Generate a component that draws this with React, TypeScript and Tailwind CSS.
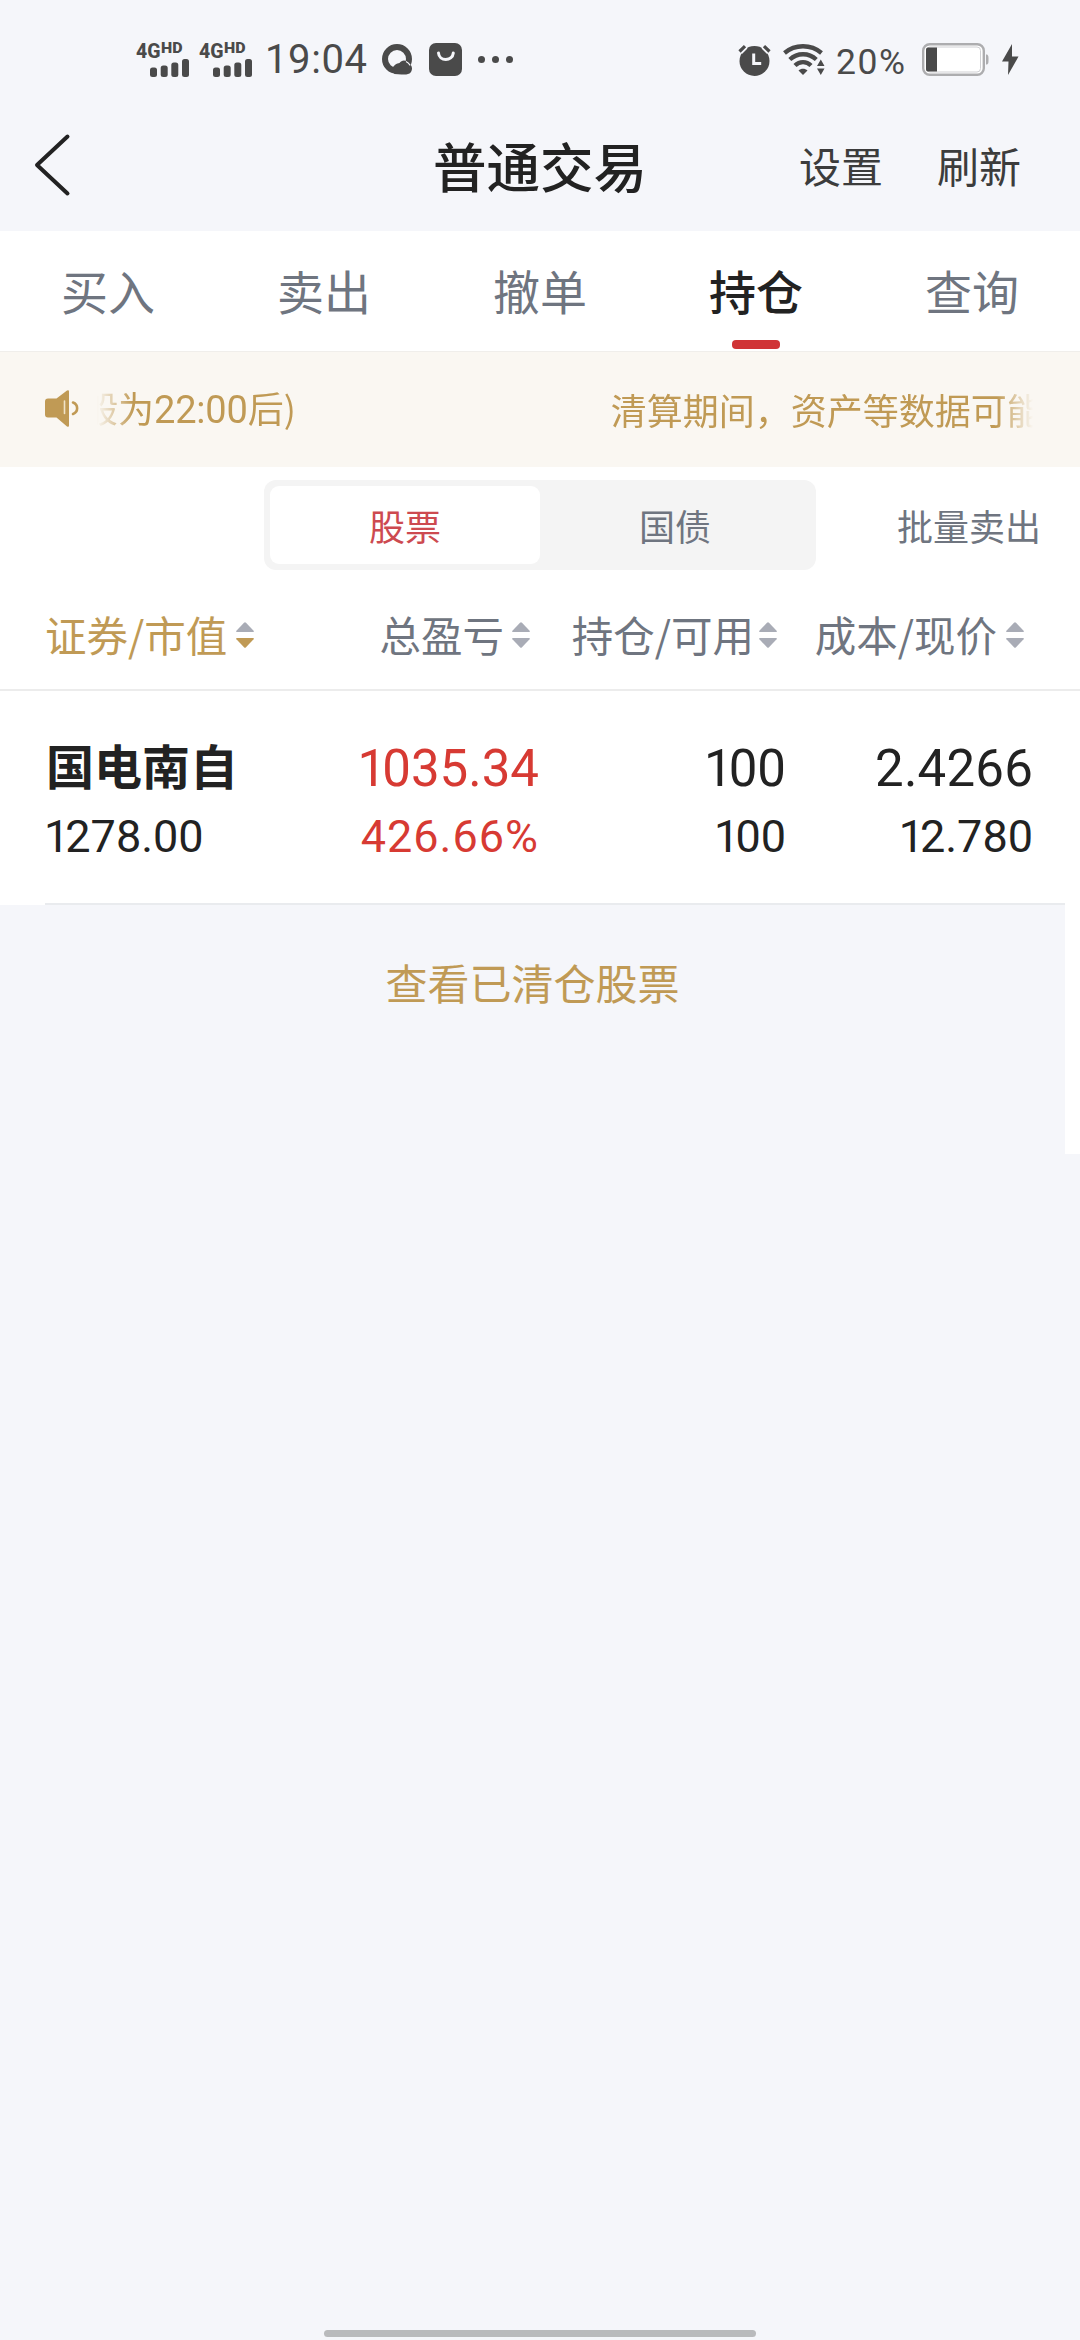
import React, { useState } from 'react';

interface SortIconProps {
  active?: boolean;
}

interface Holding {
  name: string;
  marketValue: string;
  profit: string;
  profitRate: string;
  amount: string;
  available: string;
  cost: string;
  price: string;
}

const TABS = ['买入', '卖出', '撤单', '持仓', '查询'];

const HOLDINGS: Holding[] = [
  {
    name: '国电南自',
    marketValue: '1278.00',
    profit: '1035.34',
    profitRate: '426.66%',
    amount: '100',
    available: '100',
    cost: '2.4266',
    price: '12.780'
  }
];

const SignalIcon: React.FC = () => (
  <svg className="overflow-visible" width="54" height="36" viewBox="0 0 54 36" fill="#4a4a4a">
    <text x="0" y="16" fontSize="20.500" fontWeight="800" fontFamily="Roboto, sans-serif" textLength="24.500" lengthAdjust="spacingAndGlyphs">4G</text>
    <text x="25" y="11" fontSize="14" fontWeight="900" fontFamily="Roboto, sans-serif" textLength="21.500" lengthAdjust="spacingAndGlyphs">HD</text>
    <rect x="14" y="25.500" width="7" height="9.500" rx="2.500" />
    <rect x="24.700" y="23.500" width="7" height="11.500" rx="2.500" />
    <rect x="35.300" y="20.500" width="7" height="14.500" rx="2.500" />
    <rect x="46" y="17" width="7" height="18" rx="2.500" />
  </svg>
);

const QIcon: React.FC = () => (
  <svg width="31" height="31" viewBox="0 0 31 31">
    <circle cx="15" cy="15" r="12" fill="none" stroke="#4a4a4a" strokeWidth="6" />
    <path d="M10 26c1-5 5-6.500 7.500-7 2-3.500 7-3.500 8.500 0 4.500 1.500 5.500 7 1.500 10.500-2 1-4 1-8 1l-7-.5z" fill="#4a4a4a" />
    <path d="M24 17.500c1.800 1 3 2 4.200 3.800" fill="none" stroke="#f5f6fa" strokeWidth="1.200" />
  </svg>
);

const BagIcon: React.FC = () => (
  <svg width="33" height="33" viewBox="0 0 33 33">
    <rect width="33" height="33" rx="7" fill="#4a4a4a" />
    <path d="M9.500 10c.5 8.500 14 8.500 14.800 0" fill="none" stroke="#f5f6fa" strokeWidth="3" strokeLinecap="round" />
  </svg>
);

const AlarmIcon: React.FC = () => (
  <svg width="33" height="33" viewBox="0 0 33 33">
    <circle cx="16.500" cy="17" r="15" fill="#4a4a4a" />
    <path d="M1.500 7.500 7 2M31.500 7.500 26 2" stroke="#f5f6fa" strokeWidth="7" />
    <path d="M1.500 7.500 7 2.200M31.500 7.500 26 2.200" stroke="#4a4a4a" strokeWidth="3.200" />
    <path d="M15.700 9.500v10h7.500" fill="none" stroke="#f5f6fa" strokeWidth="3" />
  </svg>
);

const WifiIcon: React.FC = () => (
  <svg width="42" height="31" viewBox="0 0 42 31">
    <g fill="none" stroke="#4a4a4a" strokeWidth="4.300">
      <path d="M1.500 9c10.500-9 26.500-9 37 0" />
      <path d="M6.800 15.500c7.500-7 19-7 26.500 0" />
      <path d="M12 21.500c4.500-4.500 11.500-4.500 16 0" />
    </g>
    <path d="M15.500 26.500c2.500-2.500 6.500-2.500 9 0L20 31z" fill="#4a4a4a" />
    <path d="M37.800 15.500 41.500 22h-7.500z M37.800 31l3.700-6.500h-7.500z" fill="#4a4a4a" />
  </svg>
);

const BatteryIcon: React.FC = () => (
  <svg width="67" height="33" viewBox="0 0 67 33">
    <rect x="1.200" y="1.200" width="60.600" height="30.600" rx="6.500" fill="#fff" stroke="#adadaf" strokeWidth="2.400" />
    <rect x="4.500" y="4" width="54" height="25" rx="3.500" fill="none" stroke="#d0d0d3" strokeWidth="1" />
    <path d="M6 4.500h9v24h-9a2 2 0 0 1-2-2v-20a2 2 0 0 1 2-2z" fill="#4a4a4a" />
    <path d="M64 11.500c2.500 0 2.500 2 2.500 5s0 5-2.500 5z" fill="#adadaf" />
  </svg>
);

const StatusBar: React.FC = () => (
  <div className="flex h-[100px] items-center pt-[19px] pl-[136px] pr-[61px] font-[Roboto,sans-serif] text-[#4a4a4a]">
    <SignalIcon />
    <div className="ml-[9px]"><SignalIcon /></div>
    <div className="ml-[12px] mt-[1px] w-[104px] text-[40px] leading-none tracking-[0.6px]">19:04</div>
    <div className="ml-[13px]"><QIcon /></div>
    <div className="ml-[16px]"><BagIcon /></div>
    <div className="ml-[16px] flex gap-[7px]">
      <span className="size-[7px] rounded-full bg-[#4a4a4a]" />
      <span className="size-[7px] rounded-full bg-[#4a4a4a]" />
      <span className="size-[7px] rounded-full bg-[#4a4a4a]" />
    </div>
    <div className="ml-auto mt-[2px]"><AlarmIcon /></div>
    <div className="ml-[12px]"><WifiIcon /></div>
    <div className="ml-[11px] mt-[6px] w-[74px] text-[35.5px] leading-none tracking-[1.6px]">20%</div>
    <div className="ml-[12px]"><BatteryIcon /></div>
    <svg className="ml-[13px]" width="17" height="31" viewBox="0 0 17 31">
      <path d="M10 0 0 17.500h6.500L6 31l10.500-18.500h-6.500z" fill="#4a4a4a" />
    </svg>
  </div>
);

const SpeakerIcon: React.FC = () => (
  <svg className="-mt-[2px]" width="34" height="37" viewBox="0 0 34 37">
    <path d="M3 8.500h8.500L22 .5q2-1 2 1v34q0 2-2 1L11.500 27.500H3q-3 0-3-3v-13q0-3 3-3z" fill="#c09a55" />
    <path d="M19.500 11v12.500" stroke="#f0e3c8" strokeWidth="1.600" strokeLinecap="round" />
    <path d="M28 12.500c5.500 2 5.500 9.500 0 11.500" fill="none" stroke="#c09a55" strokeWidth="2.600" strokeLinecap="round" />
  </svg>
);

const SortIcon: React.FC<SortIconProps> = ({ active }) => (
  <svg width="18" height="26" viewBox="0 0 18 26">
    <path d="M8 .7q1-1 2 0l7.600 8q1 1.300-.6 1.300H1q-1.600 0-.6-1.300z" fill="#a9acb6" />
    <path d="M8 25.300q1 1 2 0l7.600-8q1-1.300-.6-1.300H1q-1.600 0-.6 1.300z" fill={active ? '#c09a55' : '#a9acb6'} />
  </svg>
);

// a leading "1" is set tighter than the other digits
const Num: React.FC<{ value: string }> = ({ value }) =>
  value.startsWith('1') ? (
    <><span className="tracking-[-4px]">1</span>{value.slice(1)}</>
  ) : (
    <>{value}</>
  );

const App: React.FC = () => {
  const [tab, setTab] = useState('持仓');
  const [category, setCategory] = useState('股票');

  return (
    <div className="flex h-[2340px] w-[1080px] flex-col overflow-hidden bg-[#f5f6fa] font-['Noto_Sans_CJK_SC',sans-serif] text-[#222]">
      <StatusBar />

      <header className="grid h-[131px] shrink-0 grid-cols-[1fr_auto_1fr] items-center pb-[2px] text-[42px] leading-none text-[#3c3c3c]">
        <button className="justify-self-start pl-[33px]">
          <svg width="38" height="64" viewBox="0 0 38 64" fill="none" stroke="#222" strokeWidth="4">
            <path d="M34.500 3.500 4 32l30.500 28.500" strokeLinecap="round" strokeLinejoin="round" />
          </svg>
        </button>
        <h1 className="text-[53.5px] font-medium leading-none text-[#222]">普通交易</h1>
        <div className="flex justify-end gap-[54px] pr-[59px]">
          <button>设置</button>
          <button>刷新</button>
        </div>
      </header>

      <nav className="grid h-[120px] shrink-0 grid-cols-5 bg-white">
        {TABS.map(name => (
          <button
            key={name}
            onClick={() => setTab(name)}
            className={`flex flex-col items-center justify-between pt-[35px] pb-[2px] text-[47px] leading-none ${tab === name ? 'font-medium text-[#222]' : 'text-[#6f7580]'}`}
          >
            {name}
            {tab === name && <span className="h-[9px] w-[48px] rounded-[4px] bg-[#d03436]" />}
          </button>
        ))}
      </nav>

      <section className="flex h-[116px] shrink-0 items-center border-t border-[#f0eeeb] bg-[#faf7f2] pl-[45px] text-[36px] leading-none text-[#c09a55]">
        <SpeakerIcon />
        <div className="ml-[18px] flex h-[60px] w-[936px] items-center overflow-hidden whitespace-nowrap pb-[2px] [mask-image:linear-gradient(to_right,transparent,black_36px,black_900px,transparent)]">
          <span className="-ml-[15px] shrink-0">
            般为<span className="font-[Roboto,sans-serif] text-[38px] tracking-[-0.2px]">22:00</span>后)
          </span>
          <span className="ml-[315px] shrink-0">清算期间，资产等数据可能</span>
        </div>
      </section>

      <main className="flex h-[687px] shrink-0 flex-col bg-white">
        <div className="flex items-center pt-[13px] pl-[264px] text-[36px] leading-none text-[#6f7580]">
          <div className="grid h-[90px] w-[552px] grid-cols-2 rounded-[12px] bg-[#f4f4f4] p-[6px]">
            {['股票', '国债'].map(name => (
              <button
                key={name}
                onClick={() => setCategory(name)}
                className={`rounded-[9px] pb-[1px] ${category === name ? 'bg-white text-[#cd4a50]' : ''}`}
              >
                {name}
              </button>
            ))}
          </div>
          <button className="ml-[81px] pb-[1px]">批量卖出</button>
        </div>

        <div className="flex h-[121px] shrink-0 items-center border-b-2 border-[#ececec] pt-[10px] text-[41.5px] leading-none text-[#6f7580]">
          <div className="flex w-[300px] items-center gap-[9px] pl-[45px] text-[#c09a55]">证券/市值<SortIcon active /></div>
          <div className="flex w-[230px] items-center justify-end gap-[8px]">总盈亏<SortIcon /></div>
          <div className="flex w-[247px] items-center justify-end gap-[5px]">持仓/可用<SortIcon /></div>
          <div className="flex w-[247px] items-center justify-end gap-[9px]">成本/现价<SortIcon /></div>
        </div>

        {HOLDINGS.map(item => (
          <div key={item.name} className="ml-[45px] mr-[15px] grid h-[214px] shrink-0 grid-cols-[270px_224px_247px_247px] content-start border-b-2 border-[#e9ebee] pt-[43px] font-[Roboto,sans-serif] text-[45px] leading-[65px]">
            <div className="-mt-[3px] h-[73px] pl-[1px] font-['Noto_Sans_CJK_SC',sans-serif] text-[48px] leading-[66px] font-bold">{item.name}</div>
            <div className="text-right text-[51px] leading-[70px] text-[#d73a33]"><Num value={item.profit} /></div>
            <div className="text-right text-[51px] leading-[70px]"><Num value={item.amount} /></div>
            <div className="text-right text-[51px] leading-[70px] tracking-[0.2px]"><Num value={item.cost} /></div>
            <div className="-ml-[1px]"><Num value={item.marketValue} /></div>
            <div className="text-right tracking-[1px] text-[#d73a33]"><Num value={item.profitRate} /></div>
            <div className="text-right"><Num value={item.available} /></div>
            <div className="text-right"><Num value={item.price} /></div>
          </div>
        ))}

        <div className="mr-[15px] flex grow justify-center bg-[#f5f6fa] pt-[56px] text-[42px] leading-none text-[#c09a55]">
          <button className="h-[42px]">查看已清仓股票</button>
        </div>
      </main>

      <div className="mx-auto mt-auto mb-[3px] h-[7px] w-[432px] shrink-0 rounded-full bg-[#b9babc]" />
    </div>
  );
};

export default App;
